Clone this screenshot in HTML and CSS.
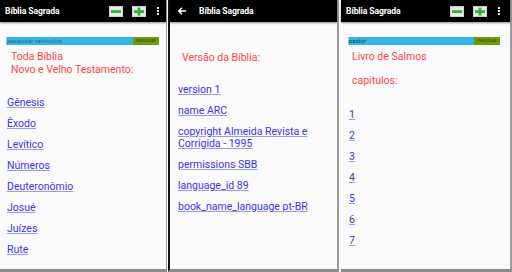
FILE: index.html
```html
<!DOCTYPE html>
<html lang="pt-BR">
<head>
<meta charset="utf-8">
<title>Bíblia Sagrada</title>
<link rel="stylesheet" href="styles.css">
</head>
<body>
<div class="screens">
  <section class="phone p1">
    <header class="bar">
      <span class="title">Bíblia Sagrada</span>
      <span class="actions">
        <svg class="zoom" width="14" height="11" viewBox="0 0 14 11"><rect x="0.5" y="0.5" width="13" height="10" fill="#e9e9e9" stroke="#cfcfcf"/><rect x="2" y="4.2" width="10" height="2.8" fill="#2fb52f"/></svg>
        <svg class="zoom" width="14" height="11" viewBox="0 0 14 11"><rect x="0.5" y="0.5" width="13" height="10" fill="#e9e9e9" stroke="#cfcfcf"/><rect x="2" y="4.2" width="10" height="2.8" fill="#2fb52f"/><rect x="5.6" y="1.5" width="2.8" height="8" fill="#2fb52f"/></svg>
        <span class="kebab"><i></i><i></i><i></i></span>
      </span>
    </header>
    <div class="body">
      <div class="search"><span class="field placeholder">pesquisar versículos</span><span class="btn">PESQUISAR</span></div>
      <p class="heading">Toda Bíblia<br>Novo e Velho Testamento:</p>
      <ul class="links books">
        <li><a href="#">Gênesis</a></li>
        <li><a href="#">Êxodo</a></li>
        <li><a href="#">Levítico</a></li>
        <li><a href="#">Números</a></li>
        <li><a href="#">Deuteronômio</a></li>
        <li><a href="#">Josué</a></li>
        <li><a href="#">Juízes</a></li>
        <li><a href="#">Rute</a></li>
      </ul>
    </div>
  </section>
  <section class="phone p2">
    <header class="bar">
      <svg class="back" width="10" height="10" viewBox="0 0 10 10"><path d="M9 5H2M5 1.8L1.8 5 5 8.2" fill="none" stroke="#fff" stroke-width="1.6"/></svg>
      <span class="title">Bíblia Sagrada</span>
    </header>
    <div class="body">
      <p class="heading version">Versão da Bíblia:</p>
      <ul class="links info">
        <li><a href="#">version 1</a></li>
        <li><a href="#">name ARC</a></li>
        <li><a href="#">copyright Almeida Revista e Corrigida - 1995</a></li>
        <li><a href="#">permissions SBB</a></li>
        <li><a href="#">language_id 89</a></li>
        <li><a href="#">book_name_language pt-BR</a></li>
      </ul>
    </div>
  </section>
  <section class="phone p3">
    <header class="bar">
      <span class="title">Bíblia Sagrada</span>
      <span class="actions">
        <svg class="zoom" width="14" height="11" viewBox="0 0 14 11"><rect x="0.5" y="0.5" width="13" height="10" fill="#e9e9e9" stroke="#cfcfcf"/><rect x="2" y="4.2" width="10" height="2.8" fill="#2fb52f"/></svg>
        <svg class="zoom" width="14" height="11" viewBox="0 0 14 11"><rect x="0.5" y="0.5" width="13" height="10" fill="#e9e9e9" stroke="#cfcfcf"/><rect x="2" y="4.2" width="10" height="2.8" fill="#2fb52f"/><rect x="5.6" y="1.5" width="2.8" height="8" fill="#2fb52f"/></svg>
        <span class="kebab"><i></i><i></i><i></i></span>
      </span>
    </header>
    <div class="body">
      <div class="search"><span class="field">pastor</span><span class="btn">PESQUISAR</span></div>
      <p class="heading">Livro de Salmos</p>
      <p class="heading sub">capítulos:</p>
      <ul class="links chapters">
        <li><a href="#">1</a></li>
        <li><a href="#">2</a></li>
        <li><a href="#">3</a></li>
        <li><a href="#">4</a></li>
        <li><a href="#">5</a></li>
        <li><a href="#">6</a></li>
        <li><a href="#">7</a></li>
      </ul>
    </div>
  </section>
</div>
</body>
</html>
```

FILE: styles.css
```css
* { box-sizing: border-box; }
html, body { margin: 0; padding: 0; background: #ffffff; }
body { font-family: Roboto, "Noto Sans", sans-serif; }

.screens {
  display: flex;
  width: 512px;
  height: 272px;
  overflow: hidden;
}

.phone {
  display: flex;
  flex-direction: column;
  height: 272px;
  background: #fafafa;
  border-bottom: 3px solid #8a8a8a;
}
.p1 { width: 167px; border-right: 1px solid #a0a0a0; }
.p2 { width: 171px; margin-left: 1px; border-left: 2px solid #111; border-right: 2px solid #9a9a9a; }
.p3 { width: 171px; margin-left: 2px; border-right: 2px solid #9a9a9a; }

.bar {
  flex: none;
  height: 22px;
  background: #000;
  display: flex;
  align-items: center;
  box-shadow: 0 1px 2px rgba(0,0,0,0.45);
  position: relative;
  z-index: 1;
}
.title {
  color: #fff;
  font-weight: 700;
  font-size: 8.6px;
  padding-left: 5px;
  letter-spacing: -0.1px;
}
.p2 .title { padding-left: 12px; }
.back { margin-left: 7px; }

.actions {
  margin-left: auto;
  display: flex;
  align-items: center;
  gap: 9px;
  padding-right: 7px;
}
.p3 .actions { padding-right: 10px; }
.zoom { display: block; }
.kebab {
  display: flex;
  flex-direction: column;
  gap: 1px;
  margin-left: 2px;
}
.kebab i { display: block; width: 2px; height: 2px; background: #e6e6e6; }

.body { flex: 1; }

.search {
  margin: 15px 7px 0 6px;
  height: 8px;
  background: #33b5e5;
  display: flex;
  align-items: center;
  border-left: 1px solid #8fd6c4;
}
.p3 .search { margin: 15px 10px 0 7px; }
.field {
  flex: 1;
  font-size: 6px;
  line-height: 8px;
  color: #1d3b4a;
  padding-left: 0;
  white-space: nowrap;
}
.field.placeholder { color: #1f6e93; }
.btn {
  width: 26px;
  height: 8px;
  background: #6f9b00;
  color: #233000;
  font-size: 3.6px;
  line-height: 8px;
  text-align: center;
}

.heading {
  margin: 5px 0 0 11px;
  color: #ff4444;
  font-size: 10.5px;
  line-height: 13px;
}
.p3 .heading { margin-left: 11px; }
.p3 .heading.sub { margin-top: 11px; }
.heading.version { margin: 29px 0 0 12px; }

.links {
  list-style: none;
  margin: 0;
  padding: 0;
  font-size: 10.5px;
}
.links a { color: #3838ec; text-decoration: underline; text-decoration-color: #9a9af4; text-underline-offset: 1px; }
.books { margin: 16px 0 0 7px; line-height: 21px; }
.info { margin: 20px 8px 0 8px; line-height: 12px; }
.info li { margin-bottom: 9px; }
.chapters { margin: 17px 0 0 8px; line-height: 21px; }
```
